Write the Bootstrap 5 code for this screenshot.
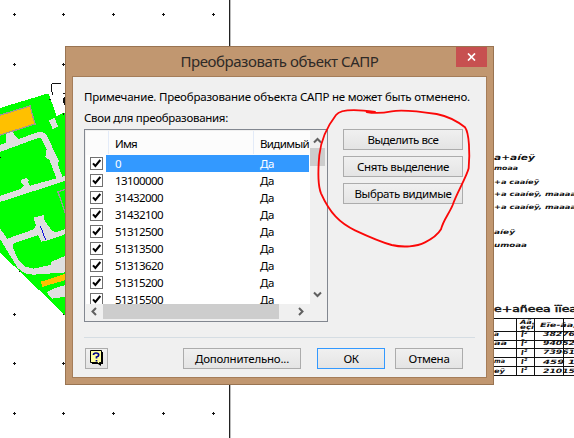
<!DOCTYPE html>
<html lang="ru">
<head>
<meta charset="utf-8">
<meta name="viewport" content="width=device-width, initial-scale=1">
<title>Преобразовать объект САПР</title>
<link href="https://cdn.jsdelivr.net/npm/bootstrap@5.3.0/dist/css/bootstrap.min.css" rel="stylesheet">
<style>
body{width:574px;height:438px;font-family:"Noto Sans","Open Sans",sans-serif;font-size:11.5px;line-height:17px;color:#000;background:#fff}
.layer{left:0;top:0;width:574px;height:438px}
.drawing text{font-family:"DejaVu Sans",sans-serif;font-weight:bold;font-style:italic;fill:#111}
.drawing .upright{font-style:normal;font-weight:normal}
.dialog-win{left:65px;top:46px;width:429px;height:339px;background:#c19770;border:1px solid #997452;padding:0 6px 6px}
.title-bar{height:29px;padding-top:1px}
.title-bar h1{font-size:15px;line-height:26px;color:#2e2a27;margin:0;font-weight:400}
.close-btn{right:0;top:0;width:31px;height:20px;background:#c75050;border:0;padding:0}
.client{height:302px;background:#f0f0f0;border:1px solid #a57d59;padding:10px 11px 0}
.client p{height:21px;line-height:19px;white-space:nowrap}
.list-box{width:244px;height:193px;border:1px solid #828790;background:#f0f0f0;padding:1px}
.rows-pane{width:224px;height:173px;background:#fff}
.head-row{height:24px;background:#fcfcfc;line-height:25px}
.head-row>div{height:23px}
.c-check{width:22px;flex:none}
.c-name{width:145px;flex:none;padding-left:7px}
.c-vis{flex:1;padding-left:7px;white-space:nowrap;overflow:hidden}
.edge{border-left:1px solid #e3ebf8;padding-left:6px}
.item-row{height:17px;flex:none}
.item-row .c-check{width:20px;padding:2px 0 0 4px;line-height:0}
.item-row .c-name{width:147px;padding-left:9px}
.item-row.chosen .c-name,.item-row.chosen .c-vis{background:#3399ff;color:#fff}
.item-row .c-vis{margin-right:1px}
.v-scroll{width:15px}
.h-scroll{height:15px;width:239px}
.h-end{margin-right:19px}
.thumb-v{height:18px;background:#cdcdcd}
.thumb-h{width:176px;background:#cdcdcd}
.btn-win{height:21px;padding:0;border:1px solid #acacac;border-radius:0;background:linear-gradient(#f0f0f0,#e4e4e4);font-size:11.5px;line-height:18px;color:#000;white-space:nowrap}
.btn-main{border-color:#3399ff}
.w-side{width:120px}.w-more{width:118px}.w-ok{width:68px}.w-help{width:23px}
.rule{height:1px;background:#d5dde3;margin-top:15px;width:391px}
.side-btns{gap:6px;margin-right:12px}
.foot{margin:10px 0 0 1px}
.foot .w-more{margin-left:75px}.foot .btn-main{margin-left:16px}.foot .btn-main+.btn{margin-left:10px}
</style>
<script src="https://cdn.jsdelivr.net/npm/bootstrap@5.3.0/dist/js/bootstrap.bundle.min.js"></script>
</head>
<body class="position-relative overflow-hidden m-0">
<svg class="drawing layer position-absolute" viewBox="0 0 574 438">
  <g transform="translate(0 80) scale(.33333)" shape-rendering="crispEdges">
    <path fill="#0f0" d="M0 84L145 40L152 58L170 108L200 95V710L60 575L0 518Z"/>
    <g fill="#dfdfdf">
      <path d="M147 122L164 113L174 140L158 147Z"/>
      <path d="M0 194L18 189V163L28 157H40L44 167L56 177L118 155L132 158L141 166L165 219L177 242L173 252L187 290L198 287V302L0 366V348L62 327L72 318L64 310V299L80 294L86 300L84 308L90 317L169 295L149 241L136 230L140 207L124 176L114 174L0 216Z"/>
      <path d="M0 446L22 476L101 448L108 437L101 413L131 405L134 421L151 446L165 458L198 447V462L137 483L124 485L114 466L41 490L37 498L54 539L75 560L100 566L154 554V545L198 527V577L100 584L75 580L54 565L0 477Z"/>
      <path d="M198 615V650L156 656L140 637L148 632L168 623Z"/>
    </g>
    <path fill="#ffc000" stroke="#a0988e" stroke-width="4" d="M-5 107L90 78L105 132L-5 167Z"/>
    <path fill="#ffc000" d="M123 605L198 581V600L126 621Z"/>
    <path fill="none" stroke="#999" stroke-width="4" d="M196 400L174 336L198 327"/>
    <path fill="none" stroke="#11d" stroke-width="3" d="M121 438L137 480"/>
    <path fill="none" stroke="#111" stroke-width="3" d="M155 35V12H183M158 46V36M164 10H183M188 42H197M190 54V68M194 50V76"/>
    <path fill="#111" d="M148 57h4v4h-4zM188 100h5v5h-5zM57 572h4v4h-4zM188 701h5v5h-5zM0 230h3v4h-3z"/>
  </g>
  <path stroke="#111" stroke-width="1" shape-rendering="crispEdges" d="M13 14.500h3M14.500 13v3M62 14.500h3M63.500 13v3M112 14.500h3M113.500 13v3M162 14.500h3M163.500 13v3M212 14.500h3M213.500 13v3M13 64.500h3M14.500 63v3M62 64.500h3M63.500 63v3M13 314.500h3M14.500 313v3M13 363.500h3M14.500 362v3M62 363.500h3M63.500 362v3M13 413.500h3M14.500 412v3M62 413.500h3M63.500 412v3M112 413.500h3M113.500 412v3M162 413.500h3M163.500 412v3M212 413.500h3M213.500 412v3"/>
  <path stroke="#222" shape-rendering="crispEdges" d="M229.500 0V438"/>
  <path stroke="#bbb" shape-rendering="crispEdges" d="M230.500 0V438"/>
  <g font-size="6">
    <text x="494" y="159.500" font-size="7.500" textLength="41" lengthAdjust="spacingAndGlyphs">a+aíeÿ</text>
    <text x="494" y="170" textLength="24" lengthAdjust="spacingAndGlyphs">moaa</text>
    <text x="494" y="183.500" textLength="45" lengthAdjust="spacingAndGlyphs">+a caaíeÿ</text>
    <text x="494" y="195.500" textLength="82" lengthAdjust="spacingAndGlyphs">+a caaíeÿ, maaaa</text>
    <text x="494" y="208.500" textLength="82" lengthAdjust="spacingAndGlyphs">+a caaíeÿ, maaaa</text>
    <text x="494" y="234" textLength="21" lengthAdjust="spacingAndGlyphs">aíeÿ</text>
    <text x="494" y="247" textLength="33" lengthAdjust="spacingAndGlyphs">umoaa</text>
    <text x="494" y="312" font-size="8" class="upright" stroke="#111" stroke-width=".4" textLength="83" lengthAdjust="spacingAndGlyphs">e+añeea ïïea</text>
    <text x="520" y="323.500" textLength="15" lengthAdjust="spacingAndGlyphs">Aä.</text>
    <text x="520" y="329" textLength="14" lengthAdjust="spacingAndGlyphs">eçi</text>
    <text x="540" y="327" textLength="37" lengthAdjust="spacingAndGlyphs">Eïe-âa,</text>
    <text x="494" y="336" textLength="5" lengthAdjust="spacingAndGlyphs">a</text>
    <text x="494" y="345" textLength="13" lengthAdjust="spacingAndGlyphs">aa</text>
    <text x="494" y="363" textLength="11" lengthAdjust="spacingAndGlyphs">ma</text>
    <text x="494" y="372.500" textLength="11" lengthAdjust="spacingAndGlyphs">eÿ</text>
    <g font-size="8"><text x="521" y="337">ï²</text><text x="521" y="346">ï²</text><text x="521" y="355">ï²</text><text x="521" y="364">ï²</text><text x="521" y="373">ï²</text></g>
    <g><text x="543" y="336" textLength="32" lengthAdjust="spacingAndGlyphs">38276</text>
    <text x="543" y="345" textLength="32" lengthAdjust="spacingAndGlyphs">94052</text>
    <text x="543" y="354" textLength="32" lengthAdjust="spacingAndGlyphs">73961</text>
    <text x="543" y="363.500" textLength="32" lengthAdjust="spacingAndGlyphs">459 1</text>
    <text x="543" y="372.500" textLength="32" lengthAdjust="spacingAndGlyphs">21015</text></g>
  </g>
  <path stroke="#111" shape-rendering="crispEdges" d="M494 318.500H574M494 331.500H574M494 340.500H574M494 348.500H574M494 357.500H574M494 366.500H574M494 375.500H574M516.500 318V375M534.500 318V375M563.500 318V375"/>
</svg>

<main class="dialog-win position-absolute">
  <header class="title-bar position-relative text-center">
    <h1><span data-w="198">Преобразовать объект САПР</span></h1>
    <button class="close-btn position-absolute d-flex align-items-center justify-content-center" aria-label="Закрыть"><svg width="9" height="8" viewBox="0 0 9 8"><path d="M1 .5L8 7.500M8 .5L1 7.500" stroke="#fff" stroke-width="1.700"/></svg></button>
  </header>
  <section class="client">
    <p class="m-0"><span data-w="386">Примечание. Преобразование объекта САПР не может быть отменено.</span></p>
    <p class="m-0"><span data-w="144">Свои для преобразования:</span></p>
    <div class="d-flex">
      <div class="list-box">
        <div class="d-flex">
          <div class="rows-pane d-flex flex-column overflow-hidden" id="rows">
            <div class="head-row d-flex flex-shrink-0"><div class="c-check"></div><div class="c-name edge"><span data-w="22">Имя</span></div><div class="c-vis edge"><span data-w="49">Видимый</span></div></div>
          </div>
          <div class="v-scroll d-flex flex-column">
            <svg width="15" height="17" viewBox="0 0 15 17"><path d="M4 11.500L7.500 8L11 11.500" fill="none" stroke="#606060" stroke-width="2"/></svg>
            <div class="thumb-v"></div>
            <svg class="mt-auto" width="15" height="17" viewBox="0 0 15 17"><path d="M4 5.500L7.500 9L11 5.500" fill="none" stroke="#606060" stroke-width="2"/></svg>
          </div>
        </div>
        <div class="h-scroll d-flex">
          <svg width="17" height="15" viewBox="0 0 17 15"><path d="M10 4L6.500 7.500L10 11" fill="none" stroke="#606060" stroke-width="2"/></svg>
          <div class="thumb-h"></div>
          <svg class="ms-auto h-end" width="10" height="15" viewBox="0 0 10 15"><path d="M3 4L6.500 7.500L3 11" fill="none" stroke="#606060" stroke-width="2"/></svg>
        </div>
      </div>
      <div class="side-btns d-flex flex-column ms-auto">
        <button class="btn btn-win w-side"><span data-w="71">Выделить все</span></button>
        <button class="btn btn-win w-side"><span data-w="92">Снять выделение</span></button>
        <button class="btn btn-win w-side"><span data-w="97">Выбрать видимые</span></button>
      </div>
    </div>
    <div class="rule"></div>
    <div class="d-flex foot">
      <button class="btn btn-win w-help d-flex justify-content-center align-items-start" aria-label="Справка">
        <svg width="15" height="18" viewBox="0 0 15 18"><path d="M3 3H14V15H12V17L9 15H3Z" fill="#000"/><path d="M1.500 1.500H12.500V13.500H10.500V15.500L8.500 13.500H1.500Z" fill="#ffffa0" stroke="#000"/><path d="M4.500 6Q4.500 4 7 4Q9.700 4 9.700 6Q9.700 7.500 7.500 8V9.500M7.500 11V12.500" fill="none" stroke="#00008b" stroke-width="1.700"/></svg>
      </button>
      <button class="btn btn-win w-more"><span data-w="94">Дополнительно...</span></button>
      <button class="btn btn-win btn-main w-ok"><span data-w="15">ОК</span></button>
      <button class="btn btn-win w-ok"><span data-w="41">Отмена</span></button>
    </div>
  </section>
</main>
<svg class="layer position-absolute pe-none" viewBox="0 0 574 438"><path transform="translate(310 100) scale(.33333)" fill="none" stroke="#fb0808" stroke-width="5.500" stroke-linecap="round" stroke-linejoin="round" d="M195 36C160 31 95 23 78 45C55 75 33 120 28 165C23 220 25 260 33 280C60 340 90 370 135 391C180 412 220 428 245 435C280 443 320 440 345 427C370 415 387 398 393 388C400 360 418 340 428 315C440 280 470 230 476 205C480 160 478 100 465 82C440 62 410 48 380 42C340 36 280 27 245 34C225 38 190 40 170 36"/></svg>
<script>
const names=['0','13100000','31432000','31432100','51312500','51313500','51313620','51315200','51315500'];
document.getElementById('rows').insertAdjacentHTML('beforeend',names.map((n,i)=>`<div class="item-row d-flex${i?'':' chosen'}"><div class="c-check"><svg width="13" height="13" viewBox="0 0 13 13"><rect x=".5" y=".5" width="12" height="12" fill="#fff" stroke="#707070"/><path d="M3 6.300L5.400 9L10.300 3" fill="none" stroke="#000" stroke-width="2"/></svg></div><div class="c-name"><span data-w="${i?48:6}">${n}</span></div><div class="c-vis"><span data-w="14">Да</span></div></div>`).join(''));
// Tune tracking so each label keeps its intended width.
document.querySelectorAll('[data-w]').forEach(s=>{
  const r=document.createRange();r.selectNodeContents(s);
  const d=(+s.dataset.w-r.getBoundingClientRect().width)/s.textContent.length;
  s.style.letterSpacing=d.toFixed(3)+'px';
});
</script>
</body>
</html>
